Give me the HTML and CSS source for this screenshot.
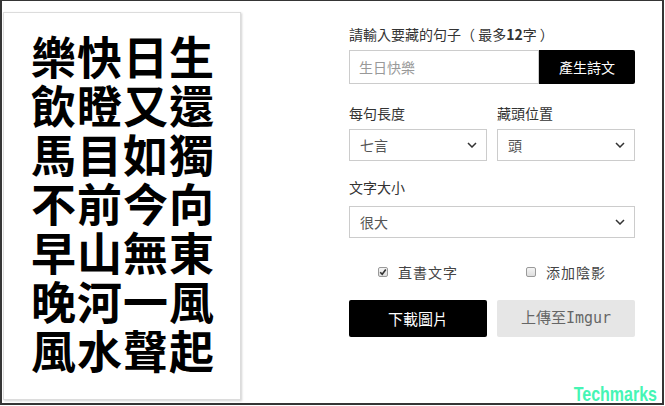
FILE: index.html
```html
<!DOCTYPE html>
<html lang="zh-Hant">
<head>
<meta charset="utf-8">
<title>藏頭詩產生器</title>
<link rel="stylesheet" href="styles.css">
</head>
<body>
<div class="frame">
  <div class="card">
    <div class="poem">生還獨向東風起<br>日又如今無一聲<br>快瞪目前山河水<br>樂飲馬不早晚風</div>
  </div>
  <div class="form">
    <div class="label first">請輸入要藏的句子（ 最多<b>12</b>字 ）</div>
    <div class="input-row">
      <div class="input">生日快樂</div>
      <div class="btn-generate">產生詩文</div>
    </div>
    <div class="pair labels-a">
      <div class="label">每句長度</div>
      <div class="label">藏頭位置</div>
    </div>
    <div class="pair">
      <div class="select"><span>七言</span><svg class="chev" width="10" height="6" viewBox="0 0 10 6"><path d="M1 1 L5 5 L9 1" fill="none" stroke="#333" stroke-width="1.5"/></svg></div>
      <div class="select"><span>頭</span><svg class="chev" width="10" height="6" viewBox="0 0 10 6"><path d="M1 1 L5 5 L9 1" fill="none" stroke="#333" stroke-width="1.5"/></svg></div>
    </div>
    <div class="label labels-b">文字大小</div>
    <div class="select wide"><span>很大</span><svg class="chev" width="10" height="6" viewBox="0 0 10 6"><path d="M1 1 L5 5 L9 1" fill="none" stroke="#333" stroke-width="1.5"/></svg></div>
    <div class="pair checks">
      <div class="check"><span class="box checked"><svg width="8" height="8" viewBox="0 0 8 8"><path d="M1.2 4.2 L3.2 6.2 L6.8 1.5" fill="none" stroke="#333" stroke-width="1.6"/></svg></span><span class="check-text">直書文字</span></div>
      <div class="check"><span class="box"></span><span class="check-text">添加陰影</span></div>
    </div>
    <div class="pair buttons">
      <div class="btn btn-dark">下載圖片</div>
      <div class="btn btn-light">上傳至Imgur</div>
    </div>
  </div>
  <div class="watermark">Techmarks</div>
</div>
</body>
</html>
```

FILE: styles.css
```css
html, body {
  margin: 0;
  padding: 0;
  background: #fff;
}

.frame {
  position: relative;
  box-sizing: border-box;
  width: 664px;
  height: 405px;
  border-style: solid;
  border-color: #353535;
  border-width: 1px 2px 2px 2px;
  padding: 11px 0 0 1px;
  display: flex;
  align-items: flex-start;
  font-family: "Noto Sans CJK TC", "Liberation Sans", sans-serif;
  color: #333;
}

.card {
  box-sizing: border-box;
  width: 238px;
  height: 388px;
  border: 1px solid #dcdcdc;
  box-shadow: 1px 1px 2px rgba(0, 0, 0, 0.18);
  display: flex;
  align-items: center;
  justify-content: center;
  background: #fff;
}

.poem {
  writing-mode: vertical-rl;
  font-family: "Noto Sans CJK TC", sans-serif;
  font-weight: 700;
  font-size: 45px;
  line-height: 46px;
  letter-spacing: 4px;
  color: #000;
}

.form {
  width: 286px;
  margin-left: 108px;
  margin-top: 12px;
  font-size: 14px;
}

.label {
  line-height: 20px;
  color: #333;
}

.label.first {
  margin-bottom: 6px;
}

.label b {
  font-weight: 700;
}

.input-row {
  display: flex;
  height: 34px;
}

.input {
  box-sizing: border-box;
  width: 190px;
  height: 34px;
  border: 1px solid #ccc;
  padding: 0 9px;
  line-height: 32px;
  color: #999;
}

.btn-generate {
  flex: 1;
  background: #000;
  color: #fff;
  text-align: center;
  line-height: 34px;
  border-radius: 0 2px 2px 0;
}

.pair {
  display: flex;
  justify-content: space-between;
}

.pair > * {
  width: 138px;
}

.labels-a {
  margin-top: 19px;
  margin-bottom: 6px;
}

.labels-b {
  margin-top: 16px;
  margin-bottom: 9px;
}

.select {
  box-sizing: border-box;
  width: 138px;
  height: 32px;
  border: 1px solid #ccc;
  padding: 0 9px 0 10px;
  display: flex;
  align-items: center;
  justify-content: space-between;
  color: #555;
}

.select.wide {
  width: 286px;
}

.chev {
  display: block;
}

.checks {
  margin-top: 24px;
  height: 20px;
}

.check {
  display: flex;
  align-items: center;
  justify-content: center;
  gap: 10px;
  line-height: 20px;
  color: #444;
  letter-spacing: 1px;
}

.box {
  box-sizing: border-box;
  width: 10px;
  height: 10px;
  border: 1px solid #9a9a9a;
  border-radius: 2px;
  background: linear-gradient(#f4f4f4, #dedede);
  display: flex;
  align-items: center;
  justify-content: center;
}

.box svg {
  display: block;
}

.buttons {
  margin-top: 18px;
}

.btn {
  height: 37px;
  line-height: 37px;
  text-align: center;
  border-radius: 2px;
  font-size: 15px;
}

.btn-dark {
  background: #000;
  color: #fff;
}

.btn-light {
  background: #e6e6e6;
  color: #666;
  font-family: "DejaVu Sans Mono", "Noto Sans CJK TC", monospace;
}

.watermark {
  position: absolute;
  right: 5px;
  bottom: -2px;
  font-family: "Liberation Sans", sans-serif;
  font-weight: 700;
  font-size: 16px;
  line-height: 16px;
  color: #45f5b4;
  transform: scaleY(1.3);
  transform-origin: bottom;
}
```
